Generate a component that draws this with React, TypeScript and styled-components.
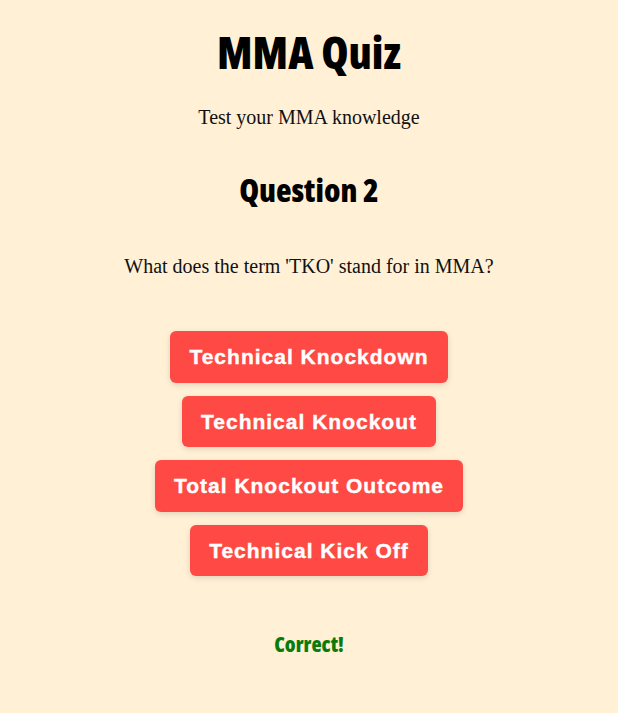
import React from "react";
import styled, { createGlobalStyle } from "styled-components";

const Global = createGlobalStyle`
  html, body { margin: 0; padding: 0; background: #fff0d6; }
  body { font-family: "Liberation Serif", "Times New Roman", serif; color: #111; }
`;

const Page = styled.main`
  display: flex;
  flex-direction: column;
  align-items: center;
  padding-top: 25px;
  min-height: 713px;
  box-sizing: border-box;
`;

const Title = styled.h1`
  font-family: "Open Sans", sans-serif;
  font-stretch: condensed;
  font-weight: 800;
  font-size: 44px;
  line-height: 54px;
  margin: 0;
  color: #000;
`;

const Subtitle = styled.p`
  font-size: 20px;
  margin: 26px 0 0;
  line-height: 24px;
`;

const QuestionHeading = styled.h2`
  font-family: "Open Sans", sans-serif;
  font-stretch: condensed;
  font-weight: 800;
  font-size: 32px;
  line-height: 40px;
  margin: 41px 0 0;
  color: #000;
`;

const QuestionText = styled.p`
  font-size: 20px;
  line-height: 24px;
  margin: 44px 0 0;
`;

const Options = styled.div`
  display: flex;
  flex-direction: column;
  align-items: center;
  gap: 13px;
  margin-top: 53px;
`;

const OptionButton = styled.button`
  font-family: "Liberation Sans", Arial, sans-serif;
  font-weight: 700;
  font-size: 21px;
  letter-spacing: 1px;
  color: #fff;
  -webkit-text-stroke: 0.4px #fff;
  background: #ff4944;
  border: none;
  border-radius: 6px;
  padding: 14px 19px 14px;
  line-height: 23.5px;
  box-shadow: 0 2px 6px rgba(0, 0, 0, 0.12);
  cursor: pointer;
`;

const Feedback = styled.p`
  font-family: "Open Sans", sans-serif;
  font-stretch: condensed;
  font-weight: 800;
  font-size: 21px;
  line-height: 26px;
  color: #0a7a0a;
  margin: 55px 0 0;
`;

const options = [
  "Technical Knockdown",
  "Technical Knockout",
  "Total Knockout Outcome",
  "Technical Kick Off",
];

export default function App() {
  return (
    <>
      <Global />
      <Page>
        <Title>MMA Quiz</Title>
        <Subtitle>Test your MMA knowledge</Subtitle>
        <QuestionHeading>Question 2</QuestionHeading>
        <QuestionText>What does the term 'TKO' stand for in MMA?</QuestionText>
        <Options>
          {options.map((o) => (
            <OptionButton key={o}>{o}</OptionButton>
          ))}
        </Options>
        <Feedback>Correct!</Feedback>
      </Page>
    </>
  );
}
